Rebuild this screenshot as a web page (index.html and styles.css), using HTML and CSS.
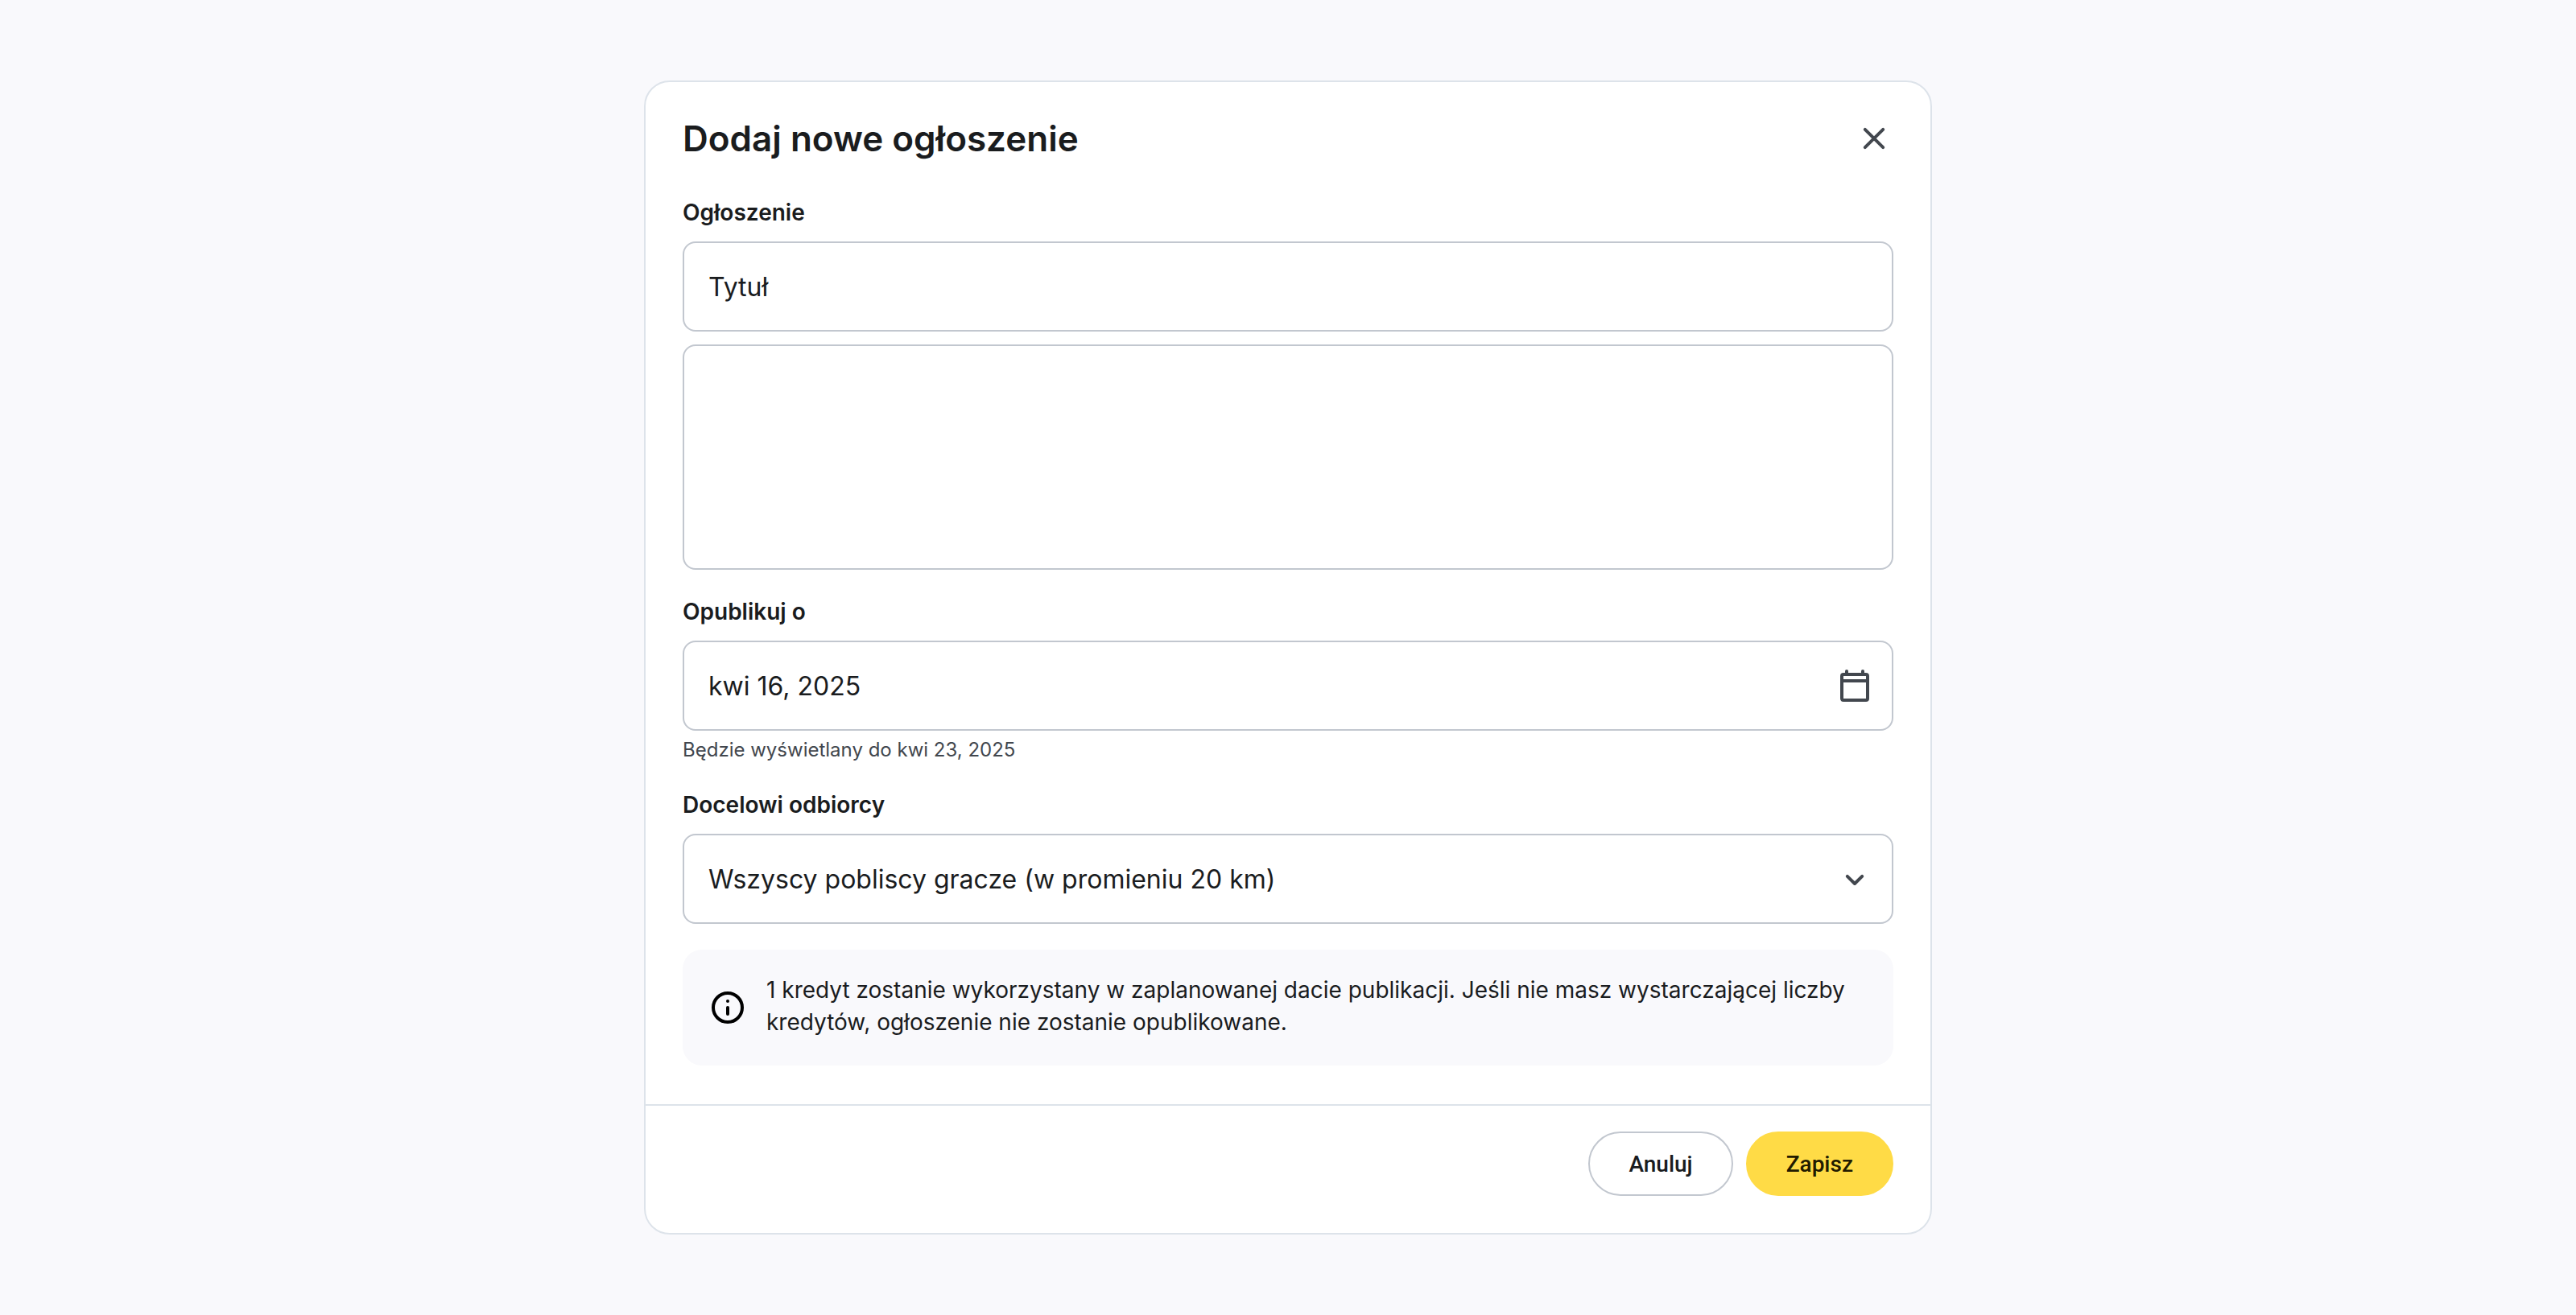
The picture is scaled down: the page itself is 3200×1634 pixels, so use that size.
FILE: index.html
```html
<!DOCTYPE html>
<html lang="pl">
<head>
	<meta charset="UTF-8">
	<meta name="viewport" content="width=device-width, initial-scale=1.0">
	<title>Dodaj nowe ogłoszenie</title>
	<link rel="stylesheet" href="styles.css">
</head>
<body>
	<form class="modal">
		<div class="modal-body">
			<div class="modal-header">
				<h2>Dodaj nowe ogłoszenie</h2>
				<button type="button" class="icon-btn" aria-label="Zamknij">
					<svg class="icon" viewBox="0 0 24 24"><path d="M6.4 6.4l11.2 11.2M17.6 6.4L6.4 17.6"/></svg>
				</button>
			</div>

			<div class="field">
				<label for="title">Ogłoszenie</label>
				<input type="text" id="title" class="control" placeholder="Tytuł">
				<textarea class="control" aria-label="Opis"></textarea>
			</div>

			<div class="field">
				<label for="date">Opublikuj o</label>
				<div class="control-box">
					<input type="text" id="date" class="control" value="kwi 16, 2025">
					<button type="button" class="icon-btn control-icon" aria-label="Kalendarz">
						<svg class="icon" viewBox="0 0 24 24"><path d="M7 5V3M17 5V3M4 9h16"/><rect x="4" y="5" width="16" height="16" rx="1"/></svg>
					</button>
				</div>
				<p class="hint">Będzie wyświetlany do kwi 23, 2025</p>
			</div>

			<div class="field">
				<label for="target">Docelowi odbiorcy</label>
				<div class="control-box">
					<select id="target" class="control">
						<option>Wszyscy pobliscy gracze (w promieniu 20 km)</option>
					</select>
					<svg class="icon control-icon arrow" viewBox="0 0 24 24"><path d="M7.4 10.4L12 15l4.600-4.600"/></svg>
				</div>
			</div>

			<div class="info">
				<svg class="icon" viewBox="0 0 24 24"><circle cx="12" cy="12" r="9"/><path d="M12 12v4M12 8v0"/></svg>
				<p>1 kredyt zostanie wykorzystany w zaplanowanej dacie publikacji. Jeśli nie masz wystarczającej liczby kredytów, ogłoszenie nie zostanie opublikowane.</p>
			</div>
		</div>

		<div class="modal-footer">
			<button type="button" class="btn">Anuluj</button>
			<button type="submit" class="btn btn-save">Zapisz</button>
		</div>
	</form>
</body>
</html>
```

FILE: styles.css
```css
*{
	box-sizing: border-box;
}
body{
	margin: 0;
	padding: 100px 40px;
	background: #f9f9fc;
	color: #1a1c1e;
	font-family: Inter, "Liberation Sans", sans-serif;
	font-size: 28px;
	line-height: 40px;
}
h2, p{
	margin: 0;
}
.modal{
	max-width: 1600px;
	margin: 0 auto;
	background: white;
	border: 2px solid #dde3ea;
	border-radius: 32px;
}
.modal-body{
	display: flex;
	flex-direction: column;
	gap: 32px;
	padding: 42px 46px 48px;
}
.modal-header{
	display: flex;
	align-items: center;
	justify-content: space-between;
	padding-bottom: 12px;
}
.modal-header h2{
	font-size: 44px;
	line-height: 56px;
	font-weight: 600;
}
.icon{
	display: block;
	flex: none;
	width: 48px;
	height: 48px;
	fill: none;
	stroke: currentColor;
	stroke-width: 2;
	stroke-linecap: round;
	stroke-linejoin: round;
}
.icon-btn{
	padding: 0;
	border: none;
	background: none;
	color: #42474e;
	cursor: pointer;
}
.field{
	display: flex;
	flex-direction: column;
}
.field label{
	margin-bottom: 16px;
	font-weight: 600;
}
.control{
	display: block;
	width: 100%;
	height: 112px;
	padding: 0 30px;
	border: 2px solid #c2c7cf;
	border-radius: 16px;
	background: white;
	color: inherit;
	font-family: inherit;
	font-size: 32px;
	appearance: none;
}
.control::placeholder{
	color: inherit;
	opacity: 1;
}
textarea.control{
	height: 280px;
	margin-top: 16px;
	padding: 30px;
	resize: none;
}
.control-box{
	position: relative;
}
/* icon on top of the input, right side */
.control-icon{
	position: absolute;
	top: 32px;
	right: 24px;
}
.arrow{
	color: #42474e;
	pointer-events: none;
}
.hint{
	margin-top: 8px;
	color: #42474e;
	font-size: 24px;
	line-height: 32px;
}
.info{
	display: flex;
	align-items: center;
	gap: 24px;
	padding: 30px 32px;
	border-radius: 24px;
	background: #f9f9fc;
}
.info p{
	padding-bottom: 4px;
}
.info .icon{
	color: black;
}
.modal-footer{
	display: flex;
	justify-content: flex-end;
	gap: 16px;
	padding: 32px 46px 46px;
	border-top: 2px solid #dde3ea;
}
.btn{
	height: 80px;
	padding: 0 48px;
	border: 2px solid #c2c7cf;
	border-radius: 40px;
	background: white;
	color: #1a1c1e;
	font-family: Roboto, "Liberation Sans", sans-serif;
	font-size: 28px;
	font-weight: 500;
	cursor: pointer;
}
.btn-save{
	border-color: #ffdb46;
	background: #ffdb46;
	color: #221b00;
}
```
